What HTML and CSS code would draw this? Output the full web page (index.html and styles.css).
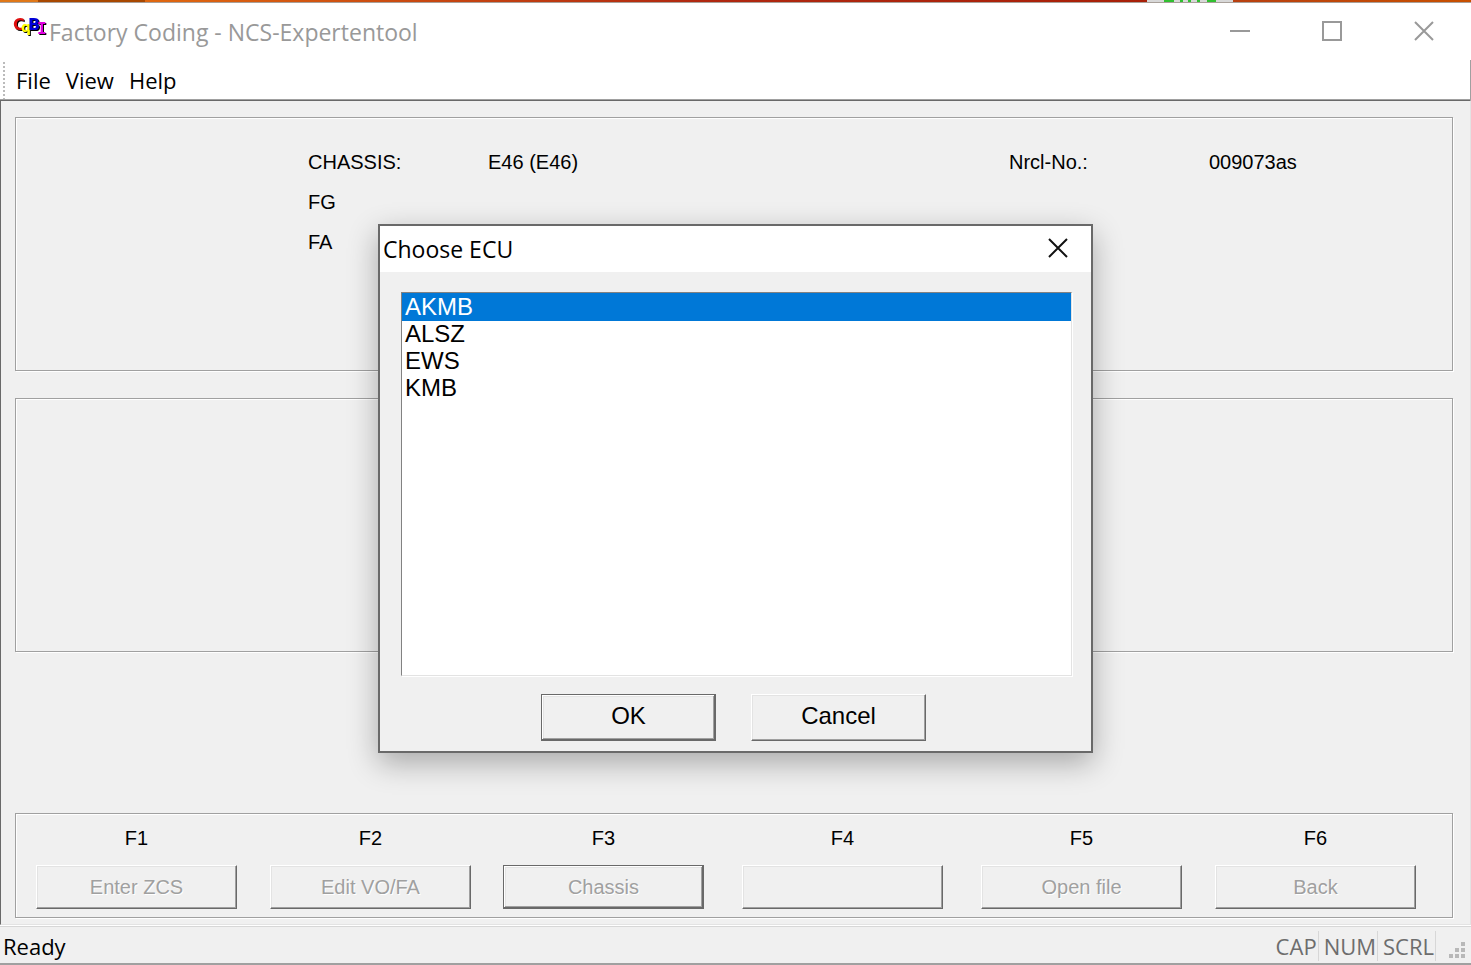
FILE: index.html
```html
<!DOCTYPE html>
<html lang="en">
<head>
  <meta charset="UTF-8">
  <meta name="viewport" content="width=device-width, initial-scale=1.0">
  <title>Factory Coding - NCS-Expertentool</title>
  <link rel="stylesheet" href="styles.css">
</head>
<body>

  <div class="strip"></div>

  <header class="title-bar">
    <svg class="logo" width="34" height="28" viewBox="0 -2 34 28" role="img">
      <text font-family="DejaVu Sans" font-weight="bold" font-size="16"><tspan x="0" y="15" fill="#e01010">C</tspan><tspan x="8" y="17" font-size="14" fill="#ffff00">q</tspan><tspan x="15" y="15" fill="#0000d8">B</tspan><tspan x="24" y="19" font-family="DejaVu Sans Mono" fill="#e000e0">I</tspan></text>
    </svg>
    <h1>Factory Coding - NCS-Expertentool</h1>
    <div class="window-buttons">
      <button type="button" aria-label="Minimize"><svg width="20" height="20" viewBox="0 0 20 20"><path d="M0 10H20"/></svg></button>
      <button type="button" aria-label="Maximize"><svg width="20" height="20" viewBox="0 0 20 20"><path d="M1 1H19V19H1Z"/></svg></button>
      <button type="button" aria-label="Close"><svg width="20" height="20" viewBox="0 0 20 20"><path d="M1 1L19 19M19 1L1 19"/></svg></button>
    </div>
  </header>

  <nav class="menu">
    <a href="#file">File</a>
    <a href="#view">View</a>
    <a href="#help">Help</a>
  </nav>

  <main class="client">
    <section class="group info">
      <span>CHASSIS:</span>
      <span>E46 (E46)</span>
      <span>Nrcl-No.:</span>
      <span>009073as</span>
      <span class="label">FG</span>
      <span class="label">FA</span>
    </section>

    <section class="group output"></section>

    <section class="group keys">
      <div class="key">
        <label for="f1">F1</label>
        <button type="button" id="f1" class="btn" disabled>Enter ZCS</button>
      </div>
      <div class="key">
        <label for="f2">F2</label>
        <button type="button" id="f2" class="btn" disabled>Edit VO/FA</button>
      </div>
      <div class="key">
        <label for="f3">F3</label>
        <button type="button" id="f3" class="btn default" disabled>Chassis</button>
      </div>
      <div class="key">
        <label for="f4">F4</label>
        <button type="button" id="f4" class="btn" disabled></button>
      </div>
      <div class="key">
        <label for="f5">F5</label>
        <button type="button" id="f5" class="btn" disabled>Open file</button>
      </div>
      <div class="key">
        <label for="f6">F6</label>
        <button type="button" id="f6" class="btn" disabled>Back</button>
      </div>
    </section>
  </main>

  <footer class="status">
    <span class="ready">Ready</span>
    <span class="lock">CAP</span>
    <span class="lock">NUM</span>
    <span class="lock">SCRL</span>
    <svg class="grip" width="16" height="16" viewBox="0 0 16 16">
      <path d="M12 0h4v4h-4zM6 6h4v4h-4zM12 6h4v4h-4zM0 12h4v4h-4zM6 12h4v4h-4zM12 12h4v4h-4z"/>
    </svg>
  </footer>

  <dialog class="dialog" open aria-labelledby="dialog-title">
    <div class="dialog-title">
      <h2 id="dialog-title">Choose ECU</h2>
      <button type="button" aria-label="Close"><svg width="20" height="20" viewBox="0 0 20 20"><path d="M1 1L19 19M19 1L1 19"/></svg></button>
    </div>
    <div class="dialog-body">
      <select class="ecu-list" size="14" aria-labelledby="dialog-title">
        <option selected>AKMB</option>
        <option>ALSZ</option>
        <option>EWS</option>
        <option>KMB</option>
      </select>
      <div class="dialog-buttons">
        <button type="button" class="btn default">OK</button>
        <button type="button" class="btn">Cancel</button>
      </div>
    </div>
  </dialog>

</body>
</html>
```
FILE: styles.css
```css
* {
  box-sizing: border-box;
  margin: 0;
  padding: 0;
}

body {
  display: flex;
  flex-direction: column;
  min-height: 100vh;
  background-color: #f0f0f0;
  color: #000;
  font-family: "Open Sans", "Noto Sans", sans-serif;
  font-size: 22px;
}

h1,
h2 {
  font-size: 23px;
  font-weight: normal;
}

.strip {
  height: 3px;
  border-bottom: 1px solid #a8a09a;
  background: linear-gradient(to right, #e07818 0 38px, #a84800 38px 145px, #e06810 145px, #b02810 700px, #a82008 1147px, #d8d8d8 1147px 1164px, #30c030 1164px 1174px, #d8d8d8 1174px 1180px, #30c030 1180px 1183px, #d8d8d8 1183px 1188px, #30c030 1188px 1191px, #d8d8d8 1191px 1197px, #30c030 1197px 1200px, #d8d8d8 1200px 1207px, #30c030 1207px 1216px, #d8d8d8 1216px 1233px, #b84010 1233px, #c85000);
}

.title-bar {
  display: flex;
  height: 57px;
  padding-left: 13px;
  background-color: #fff;
  color: #999;
}

.title-bar h1 {
  flex: 1;
  padding-left: 2px;
  line-height: 58px;
}

.logo {
  margin-top: 10px;
  filter: drop-shadow(1px 1px 0 #000);
}

.window-buttons {
  display: flex;
  padding-right: 1px;
}

.window-buttons button,
.dialog-title button {
  width: 92px;
  height: 57px;
  padding-top: 1px;
  border: none;
  background: none;
}

svg path {
  fill: none;
  stroke: #999;
  stroke-width: 2;
}

.menu {
  display: flex;
  align-items: center;
  gap: 15px;
  height: 39px;
  padding-left: 13px;
  margin-left: 3px;
  box-shadow: -3px 0 #fff;
  border-right: 1px solid #a0a0a0;
  background: repeating-linear-gradient(#fff 0 2px, #bbb 2px 4px) left / 2px 100% no-repeat #fff;
}

.menu a {
  color: #000;
  text-decoration: none;
}

.client {
  flex: 1;
  display: flex;
  flex-direction: column;
  margin-top: 1px;
  padding: 16px 17px 6px 14px;
  border: 1px solid #696969;
  border-right-color: #e3e3e3;
  border-bottom-color: #e3e3e3;
  box-shadow: 0 -1px #a0a0a0;
  font: 20px "Liberation Sans", Arial, sans-serif;
}

.group {
  border: 1px solid #a0a0a0;
  box-shadow: 1px 1px #fff, inset 1px 1px #fff;
}

.info {
  display: grid;
  grid-template-columns: 180fr 521fr 200fr 243fr;
  grid-auto-rows: 40px;
  align-items: center;
  height: 254px;
  padding: 24px 0 0 292px;
}

.info .label {
  grid-column: 1;
}

.output {
  height: 254px;
  margin: 27px 0 auto;
}

.keys {
  display: grid;
  grid-template-columns: 234fr 233fr 239fr 239fr 234fr 201fr;
  height: 105px;
  padding: 10px 36px 0 20px;
}

.key {
  display: flex;
  flex-direction: column;
  width: 201px;
  text-align: center;
}

.key label {
  height: 41px;
  line-height: 28px;
}

.btn {
  height: 44px;
  border: 1px solid;
  border-color: #fff #696969 #696969 #fff;
  box-shadow: inset -1px -1px #a0a0a0, inset 1px 1px #e3e3e3;
  background-color: #f0f0f0;
  color: #000;
  font: 20px "Liberation Sans", Arial, sans-serif;
}

.btn:disabled {
  color: #a0a0a0;
  text-shadow: 1px 1px #fff;
}

.btn.default {
  border-color: #696969;
  box-shadow: inset -1px -1px #696969, inset 1px 1px #fff, inset -2px -2px #a0a0a0, inset 2px 2px #e3e3e3;
}

.status {
  display: flex;
  align-items: center;
  height: 40px;
  padding: 2px 6px 0 0;
  border-top: 1px solid #fff;
  border-bottom: 2px solid #a0a0a0;
  box-shadow: inset 0 1px #d7d7d7;
  color: #6d6d6d;
}

.ready {
  flex: 1;
  padding-left: 3px;
  color: #000;
}

.lock {
  padding: 0 1px 0 5px;
  border-right: 1px solid #d7d7d7;
}

.grip {
  margin: 8px 0 0 13px;
}

.grip path {
  fill: #b8b8b8;
  stroke: none;
}

.dialog {
  position: absolute;
  top: 224px;
  left: 0;
  right: 0;
  width: 715px;
  margin: 0 auto;
  border: 2px solid #696969;
  background-color: #f0f0f0;
  box-shadow: 0 10px 28px rgba(0, 0, 0, 0.3);
}

.dialog-title {
  display: flex;
  justify-content: space-between;
  height: 46px;
  padding-left: 3px;
  background-color: #fff;
}

.dialog-title h2 {
  line-height: 46px;
}

.dialog-title button {
  width: 66px;
  height: 45px;
}

.dialog-title path {
  stroke: #111;
}

.dialog-body {
  padding: 20px 19px 10px 21px;
}

.ecu-list {
  display: block;
  width: 100%;
  height: 384px;
  border: 1px solid;
  border-color: #828282 #e3e3e3 #e3e3e3 #828282;
  border-radius: 0;
  outline: none;
  box-shadow: 1px 1px #fff;
  background-color: #fff;
  color: #000;
  font: 24px "Liberation Sans", Arial, sans-serif;
}

.ecu-list option {
  height: 27px;
  min-height: 27px;
  padding: 0 3px;
  line-height: 27px;
}

.ecu-list option:checked {
  background: linear-gradient(#0078d7, #0078d7);
  box-shadow: 0 1px #0078d7;
  -webkit-text-fill-color: #fff;
}

.dialog-buttons {
  display: flex;
  justify-content: center;
  gap: 35px;
  padding: 18px 6px 0 0;
}

.dialog-buttons .btn {
  width: 175px;
  height: 47px;
  padding-bottom: 3px;
  font-size: 24px;
}
```
